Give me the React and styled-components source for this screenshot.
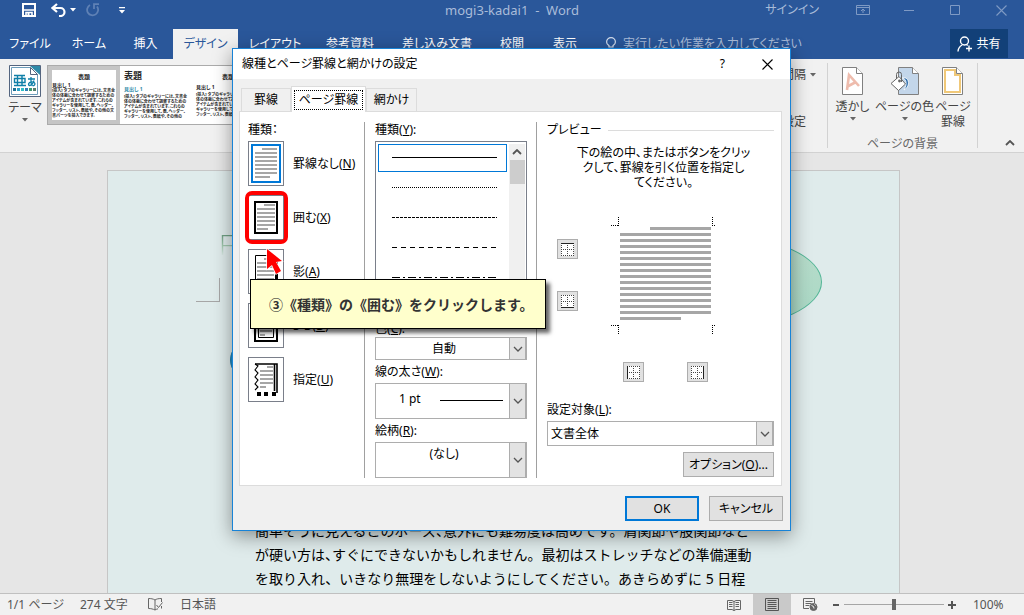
import React from "react";
import styled, { createGlobalStyle, css } from "styled-components";

const Global = createGlobalStyle`
  * { box-sizing: border-box; }
  body {
    margin: 0;
    font-family: "Noto Sans", "Noto Sans CJK JP", sans-serif;
    font-size: 12px;
    line-height: 16px;
    font-feature-settings: "palt";
    color: #000;
  }
  button, select, input {
    font: inherit;
    font-feature-settings: inherit;
    color: inherit;
    margin: 0;
    padding: 0;
    border: 0;
    border-radius: 0;
    background: none;
  }
  svg { display: block; flex: none; }
  ul, p, h1, h2 { margin: 0; padding: 0; font: inherit; list-style: none; }
`;

/* ---------- application window ---------- */

const Window = styled.div`
  position: relative;
  display: flex;
  flex-direction: column;
  height: 100vh;
  overflow: hidden;
  background: #e6e6e6;
`;

const TitleBar = styled.header`
  display: grid;
  grid-template-columns: 1fr auto 1fr;
  align-items: center;
  height: 29px;
  padding-bottom: 10px;
  background: #2a579a;
  color: #a9bcd9;
`;

const QuickAccess = styled.div`
  display: flex;
  align-items: center;
  padding-left: 22px;
`;

const IconButton = styled.button`
  display: flex;
  align-items: center;
  justify-content: center;
  width: ${(p) => p.$w || 16}px;
  height: ${(p) => p.$h || 20}px;
  margin-right: ${(p) => p.$gap || 0}px;
`;

const DocTitle = styled.h1`
  font-size: 13px;
  white-space: pre;
`;

const WindowTools = styled.div`
  display: flex;
  align-items: center;
  justify-content: flex-end;
  gap: 30px;
  padding-right: 15px;
  button:first-child { width: auto; margin-right: 6px; }
`;

const TabRow = styled.nav`
  display: flex;
  height: 30px;
  background: #2a579a;
`;

const RibbonTab = styled.button`
  width: ${(p) => p.$w}px;
  height: 30px;
  text-align: center;
  white-space: nowrap;
  color: ${(p) => (p.$active ? "#2a579a" : "#fff")};
  background: ${(p) => (p.$active ? "#f1f1f1" : "transparent")};
`;

const TellMe = styled.label`
  display: flex;
  align-items: center;
  flex: 1;
  gap: 6px;
  padding-left: 13px;
  color: #a9bcd9;
  input { width: 200px; color: #fff; }
  input::placeholder { color: #a9bcd9; opacity: 1; }
`;

const ShareButton = styled.button`
  display: flex;
  align-items: center;
  justify-content: center;
  gap: 3px;
  width: 58px;
  height: 29px;
  margin-right: 16px;
  color: #fff;
  background: #124078;
`;

const Ribbon = styled.section`
  display: flex;
  height: 94px;
  padding: 4px 0 4px 6px;
  background: #f1f1f1;
  border-bottom: 1px solid #d2d2d2;
  color: #444;
`;

const BigButton = styled.button`
  display: flex;
  flex-direction: column;
  align-items: center;
  align-self: flex-start;
  gap: 3px;
  width: ${(p) => p.$w}px;
  padding-top: ${(p) => p.$top || 2}px;
  line-height: 15px;
  white-space: nowrap;
`;

const Gallery = styled.div`
  display: flex;
  align-self: flex-start;
  width: 500px;
  height: 60px;
  margin: 2px 0 0 3px;
  background: #fff;
  border: 1px solid #ababab;
`;

const StyleCard = styled.button`
  display: flex;
  flex-direction: column;
  justify-content: flex-start;
  width: 72px;
  height: 58px;
  border: 4px solid ${(p) => (p.$selected ? "#c5c5c5" : "#fff")};
  text-align: left;
  color: #222;
  font-size: 4px;
  line-height: 5px;
  font-weight: 700;
`;

const CardTitle = styled.span`
  width: 100%;
  height: ${(p) => (p.$big ? 15 : 13)}px;
  line-height: ${(p) => (p.$big ? 12 : 15)}px;
  font-size: ${(p) => (p.$big ? 9 : 6)}px;
  text-align: ${(p) => p.$align || "left"};
`;

const CardHeading = styled.span`
  font-size: 5px;
  line-height: ${(p) => (p.$tall ? 9 : 5)}px;
  color: ${(p) => p.$color || "#222"};
`;

const RibbonSide = styled.div`
  display: flex;
  flex-direction: column;
  flex: 1;
  justify-content: space-between;
  align-items: flex-end;
  padding: 4px 11px 18px 0;
  button { display: flex; align-items: center; gap: 4px; white-space: nowrap; }
`;

const RibbonGroup = styled.div`
  display: flex;
  flex-direction: column;
  justify-content: space-between;
  width: 151px;
  border: solid #d2d2d2;
  border-width: 0 1px;
  text-align: center;
  line-height: 8px;
  color: #666;
  > div { display: flex; padding-left: 2px; color: #444; }
`;

const Collapse = styled.div`
  display: flex;
  align-items: flex-end;
  width: 46px;
  padding-left: 26px;
`;

/* ---------- document ---------- */

const Workspace = styled.main`
  display: flex;
  justify-content: center;
  flex: 1;
  min-height: 0;
  padding: 17px 17px 0 0;
  overflow: hidden;
`;

const Paper = styled.article`
  position: relative;
  width: 793px;
  padding: 61px 147px 0;
  overflow: hidden;
  background: #dfebeb;
  border: 1px solid #c6c6c6;
  border-bottom: 0;
`;

const WordArt = styled.h2`
  width: 530px;
  height: 24px;
  margin: 0 0 263px -36px;
  font-family: "Open Sans", sans-serif;
  font-size: 28px;
  font-weight: 300;
  line-height: 24px;
  color: transparent;
  background: linear-gradient(#5f9275, #a5cbb2 60%, #dfebeb);
  background-clip: text;
`;

const CropMark = styled.span`
  position: absolute;
  left: 88px;
  top: 107px;
  width: 24px;
  height: 24px;
  border: solid #a6a6a6;
  border-width: 0 1px 1px 0;
`;

const Bubble = styled.span`
  position: absolute;
  left: ${(p) => p.$x}px;
  top: ${(p) => p.$y}px;
  width: ${(p) => p.$w}px;
  height: ${(p) => p.$h}px;
  border-radius: 50%;
  border: 1px solid ${(p) => p.$line};
  background: ${(p) => p.$fill};
`;

const BodyText = styled.p`
  font-size: 14px;
  line-height: 24px;
  font-feature-settings: normal;
  white-space: nowrap;
`;

const Tight = styled.span`
  font-feature-settings: "halt";
`;

const StatusBar = styled.footer`
  display: flex;
  align-items: center;
  height: 22px;
  padding-left: 7px;
  background: #f1f1f1;
  border-top: 1px solid #c0c0c0;
  color: #555;
`;

const StatusItem = styled.button`
  display: flex;
  width: ${(p) => p.$w}px;
  white-space: pre;
`;

const Spacer = styled.div`
  flex: 1;
`;

const ViewButton = styled.button`
  display: flex;
  align-items: center;
  justify-content: center;
  width: 38px;
  height: 21px;
  background: ${(p) => (p.$active ? "#c9c9c9" : "transparent")};
`;

const Zoom = styled.div`
  display: flex;
  align-items: center;
  gap: 4px;
  padding: 0 23px 0 3px;
  output { width: 41px; padding-left: 13px; }
`;

const ZoomSlider = styled.input`
  appearance: none;
  width: 100px;
  height: 12px;
  background: linear-gradient(#a6a6a6, #a6a6a6) center / 100% 1px no-repeat;
  &::-webkit-slider-thumb {
    appearance: none;
    width: 4px;
    height: 11px;
    background: #666;
  }
`;

/* ---------- dialog ---------- */

const Dialog = styled.div`
  position: absolute;
  left: 232px;
  top: 48px;
  width: 559px;
  background: #f0f0f0;
  border: 1px solid #1883d7;
  box-shadow: 0 5px 18px rgba(0, 0, 0, 0.4);
`;

const DialogTitle = styled.div`
  display: flex;
  align-items: center;
  height: 30px;
  padding: 0 17px 0 9px;
  background: #fff;
  h2 { flex: 1; }
  button + button { margin-left: 37px; }
`;

const DialogTabs = styled.div`
  display: flex;
  align-items: flex-end;
  height: 32px;
  padding: 0 8px;
`;

const DialogTab = styled.button`
  height: ${(p) => (p.$active ? 26 : 23)}px;
  width: ${(p) => p.$w}px;
  margin-bottom: ${(p) => (p.$active ? -1 : 0)}px;
  border: 1px solid #dcdcdc;
  border-bottom: 0;
  background: ${(p) => (p.$active ? "#fff" : "#f0f0f0")};
  white-space: nowrap;
  span {
    display: block;
    margin: 0 4px;
    ${(p) => p.$active && css`outline: 1px dotted #000; outline-offset: 1px;`}
  }
`;

const Panel = styled.div`
  display: grid;
  grid-template-columns: 117px 172px 1fr;
  height: 375px;
  margin: 0 8px 0 6px;
  padding: 10px 7px 7px 8px;
  background: #fff;
  border: 1px solid #dcdcdc;
`;

const Column = styled.div`
  display: flex;
  flex-direction: column;
  padding: 0 ${(p) => p.$right || 0}px 0 ${(p) => p.$left || 0}px;
  border-right: ${(p) => (p.$rule ? "1px solid #a0a0a0" : "0")};
`;

const Label = styled.label`
  display: block;
  height: ${(p) => p.$h || 19}px;
  line-height: 16px;
  white-space: nowrap;
`;

const SettingList = styled.div`
  display: flex;
  flex-direction: column;
  gap: 9px;
`;

const Setting = styled.button`
  display: flex;
  align-items: center;
  gap: 9px;
  white-space: nowrap;
`;

const Thumb = styled.span`
  display: flex;
  align-items: center;
  justify-content: center;
  width: 36px;
  height: 45px;
  background: #fff;
  border: 1px solid #7a7f8a;
`;

const ListBox = styled.div`
  display: flex;
  width: 152px;
  height: 177px;
  margin-bottom: 3px;
  padding: 2px 1px 2px 2px;
  border: 1px solid #7a7f8a;
  ul { flex: 1; }
`;

const LineOption = styled.li`
  display: flex;
  align-items: center;
  justify-content: center;
  height: ${(p) => (p.$selected ? 28 : 30)}px;
  padding-left: 4px;
  border: ${(p) => (p.$selected ? "1px solid #0078d7" : "0")};
  margin-bottom: ${(p) => (p.$selected ? 1 : 0)}px;
`;

const ScrollBar = styled.div`
  display: flex;
  flex-direction: column;
  align-items: center;
  width: 16px;
  margin-left: 2px;
  padding-top: 5px;
  background: #f0f0f0;
  i { width: 15px; height: 24px; margin-top: 5px; background: #cdcdcd; }
`;

const ComboBox = styled.div`
  position: relative;
  width: ${(p) => (p.$wide ? "100%" : "152px")};
  height: ${(p) => p.$h}px;
  margin-bottom: ${(p) => p.$after ?? 4}px;
  background: #fff;
  border: 1px solid #adadad;
  select {
    appearance: none;
    width: 100%;
    height: 100%;
    padding: 0 ${(p) => (p.$indent ? 18 : 14)}px ${(p) => p.$lift || 0}px ${(p) => p.$indent || 0}px;
    text-align-last: ${(p) => (p.$indent ? "left" : "center")};
  }
`;

const ComboArrow = styled.span`
  position: absolute;
  inset: 0 0 0 auto;
  display: flex;
  align-items: center;
  justify-content: center;
  width: 17px;
  background: #e3e3e3;
  border: 1px solid #adadad;
  border-width: 0 1px 0 1px;
  pointer-events: none;
`;

const WidthSample = styled.span`
  position: absolute;
  left: 64px;
  top: 16px;
  width: 63px;
  height: 1px;
  background: #000;
  pointer-events: none;
`;

const Legend = styled.div`
  display: flex;
  align-items: center;
  gap: 6px;
  height: 16px;
  white-space: nowrap;
  &::after { content: ""; flex: 1; height: 1px; background: #dcdcdc; }
`;

const Hint = styled.p`
  margin: 7px 0 27px 6px;
  line-height: 15px;
  text-align: center;
  white-space: nowrap;
`;

const PreviewGrid = styled.div`
  display: grid;
  grid-template-columns: 21px 106px;
  column-gap: 32px;
  row-gap: 26px;
  padding-left: 10px;
  margin-bottom: 20px;
`;

const SideButtons = styled.div`
  display: flex;
  flex-direction: column;
  gap: 32px;
  padding-top: 22px;
`;

const BottomButtons = styled.div`
  display: flex;
  grid-column: 2;
  gap: 43px;
  padding-left: 13px;
`;

const EdgeButton = styled.button`
  display: flex;
  align-items: center;
  justify-content: center;
  width: 21px;
  height: 20px;
  background: #e1e1e1;
  border: 1px solid #adadad;
`;

const PushButton = styled.button`
  align-self: flex-end;
  width: ${(p) => p.$w || 74}px;
  height: 25px;
  flex: none;
  background: #e1e1e1;
  border: ${(p) => (p.$primary ? "2px solid #0078d7" : "1px solid #adadad")};
  white-space: nowrap;
`;

const DialogActions = styled.div`
  display: flex;
  justify-content: flex-end;
  gap: 10px;
  padding: 10px 7px 9px;
`;

/* ---------- instruction callout ---------- */

const Highlight = styled.div`
  position: absolute;
  left: 245px;
  top: 191px;
  width: 43px;
  height: 53px;
  border: 4px solid #f00;
  border-radius: 7px;
  pointer-events: none;
`;

const Callout = styled.div`
  position: absolute;
  left: 250px;
  top: 279px;
  width: 296px;
  height: 50px;
  padding-left: 18px;
  background: #ffc;
  border: 1px solid #000;
  box-shadow: 4px 4px 4px rgba(0, 0, 0, 0.6);
  font-size: 14px;
  font-weight: 700;
  line-height: 48px;
  font-feature-settings: normal;
  font-family: "Noto Sans CJK JP", sans-serif;
  color: #333;
  white-space: nowrap;
`;

const Pointer = styled.svg`
  position: absolute;
  left: 264px;
  top: 247px;
`;

/* ---------- drawings ---------- */

const Caret = ({ color = "#666" }) => (
  <svg width="6" height="4" viewBox="0 0 6 4"><path d="M0 0h6L3 3.5z" fill={color} /></svg>
);

const Chevron = ({ up, color = "#555", w = 1.3 }) => (
  <svg width="10" height="6" viewBox="0 0 10 6">
    <path d={up ? "M1 5l4-4 4 4" : "M1 1l4 4 4-4"} fill="none" stroke={color} strokeWidth={w} />
  </svg>
);

const SaveIcon = () => (
  <svg width="14" height="14" viewBox="0 0 14 14">
    <path d="M1 1h12v12H1z" fill="none" stroke="#fff" strokeWidth="2" />
    <path d="M2 7h10M4 13V9.500h6V13" fill="none" stroke="#fff" strokeWidth="1.600" />
    <path d="M5.500 10h2v3h-2z" fill="#fff" />
  </svg>
);

const UndoIcon = () => (
  <svg width="15" height="14" viewBox="0 0 15 14">
    <path d="M6 1L1.500 5 6 9M2 5h7.500a4 4 0 010 8H8" fill="none" stroke="#fff" strokeWidth="2.200" />
  </svg>
);

const RedoIcon = () => (
  <svg width="14" height="14" viewBox="0 0 14 14">
    <path d="M4 2a5.500 5.500 0 107 1.500M8 6V1.200h5" fill="none" stroke="#5f81b5" strokeWidth="1.800" />
  </svg>
);

const MoreIcon = () => (
  <svg width="6" height="7" viewBox="0 0 6 7"><path d="M0 0h6v1.300H0zM0 3h6L3 6.500z" fill="#fff" /></svg>
);

const RibbonOptionsIcon = () => (
  <svg width="14" height="10" viewBox="0 0 14 10" fill="none" stroke="#7f9ac4">
    <path d="M.5.5h13v9H.5zM.5 2.500h13M7 8V4.500M5 6l2-2 2 2" />
  </svg>
);

const MinIcon = () => <svg width="10" height="10" viewBox="0 0 10 10"><path d="M0 5.500h10" stroke="#7f9ac4" /></svg>;
const MaxIcon = () => <svg width="10" height="10" viewBox="0 0 10 10"><path d="M.5.5h9v9h-9z" fill="none" stroke="#7f9ac4" /></svg>;
const CloseIcon = ({ color = "#7f9ac4" }) => (
  <svg width="11" height="11" viewBox="0 0 11 11"><path d="M.5.5l10 10M10.500.5l-10 10" stroke={color} strokeWidth="1.100" /></svg>
);

const BulbIcon = () => (
  <svg width="12" height="14" viewBox="0 0 12 14" fill="none" stroke="#d5dfee" strokeWidth="1.200">
    <path d="M4 10V8.600C2.500 7.800 1.600 6.600 1.600 5a4.400 4.400 0 018.800 0c0 1.600-.9 2.800-2.400 3.600V10zM4 12h4M4.500 13.500h3" />
  </svg>
);

const ShareIcon = () => (
  <svg width="16" height="16" viewBox="0 0 16 16" fill="none" stroke="#fff" strokeWidth="1.400">
    <circle cx="7.500" cy="5" r="4" />
    <path d="M1 15.500c.2-3.500 1.800-5.200 4.200-6.500M9.500 8.500l1.200 1M12 9.500v6M9 12.500h6" />
  </svg>
);

const ThemeIcon = () => (
  <svg width="32" height="32" viewBox="0 0 32 32">
    <path d="M.5.5h31v31H.5z" fill="#fff" stroke="#54657f" />
    <path d="M2.500 2.500h19l7 7v20h-26z" fill="#fff" stroke="#6d9dba" />
    <path d="M21 1h10v9z" fill="#2e8aa8" /><path d="M21.500 2.500v7h7z" fill="#fff" stroke="#54657f" />
    <path d="M5 10.500h11M5 20.500h12M8.500 10.500v10M13 10.500v10M5.500 13.500h10.500v4H5.500z" fill="none" stroke="#0e7fa8" strokeWidth="1.400" />
    <path d="M19 14h7M22 12v5c0 2 .5 3 1.500 4M25 15.500c-1 3-3 5-4.500 5s-1.500-3.500 2-3.700c4-.2 4.500 3.200 1.500 4" fill="none" stroke="#0e7fa8" strokeWidth="1.300" />
    <path d="M4 23h3v3H4z" fill="#1c6f94" /><path d="M8 23h3v3H8z" fill="#29a3c9" /><path d="M12 23h3v3h-3z" fill="#30c0c8" />
    <path d="M16 23h3v3h-3z" fill="#2f7fb6" /><path d="M20 23h3v3h-3z" fill="#3e9a71" /><path d="M24 23h3v3h-3z" fill="#58806c" />
  </svg>
);

const Sheet = ({ fill = "#fff", children, w = 22, x = 0 }) => (
  <svg width={w} height="29" viewBox={`0 0 ${w} 29`}>
    <g transform={`translate(${x} 0)`}>
      <path d="M.5.5h14l6 6v21H.5z" fill={fill} stroke="#808080" />
      <path d="M14.500.5v6h6" fill="#fff" stroke="#808080" />
    </g>
    {children}
  </svg>
);

const WatermarkIcon = () => (
  <Sheet><path d="M5 23L7 8l10 11M5.500 19.500l7.500-4" fill="none" stroke="#eebcad" strokeWidth="2.600" /></Sheet>
);

const PageColorIcon = () => (
  <Sheet w={30} x={8} fill="#c3d6ea">
    <path d="M11 11c5 0 7 5 3 12 5-3 6-9 2-12z" fill="#2f6fad" stroke="#fff" strokeWidth=".8" />
    <path d="M1 16.500l8-7 6.500 7.500-7 6.500z" fill="#fff" stroke="#666" />
    <path d="M6.500 12V7.500a2.500 2.500 0 015 0V15" fill="none" stroke="#666" />
    <circle cx="9.500" cy="14" r="1.400" fill="#666" />
  </Sheet>
);

const PageBorderIcon = () => (
  <Sheet><path d="M3 3h10v5h5v17H3z" fill="none" stroke="#f0c878" strokeWidth="2" /></Sheet>
);

const ProofIcon = () => (
  <svg width="15" height="13" viewBox="0 0 15 13" fill="none" stroke="#666">
    <path d="M7 12V2C5 .8 3 .5.500.5V10.500c2.500 0 4.500.5 6.500 1.500 1-.6 2-1 3-1.200M7 2C8.500 1 10 .5 13.500.5V4M8.500 7l2 2.500 4-5M13.500 8v2.500" />
  </svg>
);

const ReadIcon = () => (
  <svg width="14" height="12" viewBox="0 0 14 12" fill="none" stroke="#666">
    <path d="M.5 1.500H5L7 2.500l2-1h4.500v9H9l-2 1-2-1H.5zM7 2v10M2 3.500h3.500M2 5.500h3.500M2 7.500h3.500M8.500 3.500H12M8.500 5.500H12M8.500 7.500H12" />
  </svg>
);

const PrintIcon = () => (
  <svg width="14" height="13" viewBox="0 0 14 13" fill="none" stroke="#555">
    <path d="M.5.5h13v12H.5zM2.500 2.500h9M2.500 4.500h9M2.500 6.500h9M2.500 8.500h9M2.500 10.500h9" />
  </svg>
);

const WebIcon = () => (
  <svg width="15" height="13" viewBox="0 0 15 13" fill="none" stroke="#666">
    <path d="M6 10.500H.5V.5h11V5M2.500 3.500h7M2.500 5.500h6M2.500 7.500h4" />
    <circle cx="10.500" cy="9" r="3.500" fill="#666" />
    <path d="M8.500 7.500l2 1 .5 2M11.500 6.500l1 1" stroke="#f1f1f1" />
  </svg>
);

const PlusMinus = ({ plus }) => (
  <svg width="8" height="8" viewBox="0 0 8 8"><path d={plus ? "M0 4h8M4 0v8" : "M1 4h6"} stroke="#555" strokeWidth="2" /></svg>
);

const TextLines = ({ x, y, w, n }) =>
  Array.from({ length: n }, (_, i) => (
    <path
      key={i}
      d={`M${i === 0 ? x + 7 : x} ${y + i * 4}H${i === n - 1 ? x + w - 7 : x + w}`}
      stroke="#a6a6a6"
      strokeWidth="2"
    />
  ));

const SettingArt = ({ kind }) => (
  <svg width="30" height="39" viewBox="0 0 30 39" fill="none">
    {kind === "none" && <><path d="M1 1h28v37H1z" stroke="#0078d7" strokeWidth="2" /><TextLines x={4} y={5} w={22} n={8} /></>}
    {kind === "box" && <><path d="M4 4h22v31H4z" stroke="#000" strokeWidth="2" /><TextLines x={6} y={7} w={18} n={7} /></>}
    {kind === "shadow" && <><path d="M4.500 3.500h20v30h-20z" stroke="#000" /><path d="M26 6v30H7" stroke="#000" strokeWidth="2" /><TextLines x={6} y={7} w={17} n={7} /></>}
    {kind === "threeD" && <><path d="M4 4h22v31H4z" stroke="#000" strokeWidth="2" /><path d="M7.500 6.500h15v25h-15z" stroke="#000" /><TextLines x={9} y={9} w={12} n={6} /></>}
    {kind === "custom" && (
      <>
        <path d="M4 4h22v29M23.500 4v27" stroke="#000" strokeWidth="1.600" />
        <path d="M4 4l3 2-3 4 3 3-3 4 3 3-3 4 3 3-3 3" stroke="#000" strokeWidth="1.100" />
        <path d="M6 34h4M13 34h4M21 34h4" stroke="#000" strokeWidth="4" />
        <TextLines x={9} y={7} w={13} n={6} />
      </>
    )}
  </svg>
);

const LineSample = ({ dash }) => (
  <svg width="105" height="2" viewBox="0 0 105 2"><path d="M0 .5h105" stroke="#000" strokeDasharray={dash} /></svg>
);

const EdgeArt = ({ edge }) => {
  const solid = { top: "M0 .5h13", bottom: "M0 12.500h13", left: "M.5 0v13", right: "M12.500 0v13" }[edge];
  return (
    <svg width="13" height="13" viewBox="0 0 13 13" fill="none" stroke="#444">
      <path d="M0 0h13v13H0z" fill="#fff" stroke="none" />
      <path d="M0 .5h13M0 6.500h13M0 12.500h13M.5 0v13M6.500 0v13M12.500 0v13" strokeDasharray="1 1" />
      <path d={solid} stroke="#222" />
    </svg>
  );
};

const PreviewArt = () => (
  <svg width="106" height="119" viewBox="0 0 106 119" fill="none">
    <g stroke="#000" strokeDasharray="1 1">
      <path d="M1 8.500h8M8.500 0v9M102 8.500h8M102.500 0v9" />
      <path d="M1 108.500h8M8.500 108v9M102 108.500h8M102.500 108v9" />
    </g>
    {Array.from({ length: 16 }, (_, i) => (
      <path
        key={i}
        d={`M${i === 0 ? 40 : 10} ${11.5 + i * 6}H${i === 15 ? 71 : 101}`}
        stroke="#a6a6a6"
        strokeWidth="3"
      />
    ))}
  </svg>
);

/* ---------- data ---------- */

const tabs = [
  ["ファイル", 60], ["ホーム", 58], ["挿入", 55], ["デザイン", 65, true], ["レイアウト", 74],
  ["参考資料", 76], ["差し込み文書", 98], ["校閲", 52], ["表示", 54],
];

const settings = [
  ["none", "罫線なし", "N"], ["box", "囲む", "X"], ["shadow", "影", "A"],
  ["threeD", "3-D", "D"], ["custom", "指定", "U"],
];

const dashes = ["none", "1 1", "3 1", "5 4", "8 3 2 3"];

const sampleStart =
  "[挿入] タブのギャラリーには、文書全体の体裁に合わせて調整するためのアイテムが含まれています。これらのギャラリーを使用して、表、ヘッダー、フッター、";
const sampleMore = "リスト、表紙や、その他の";
const sampleEnd = "文書パーツを挿入できます。";

const Key = ({ text, k, end = "" }) => <span>{text}(<u>{k}</u>){end}</span>;

const Combo = ({ id, value, children, ...rest }) => (
  <ComboBox {...rest}>
    <select id={id} defaultValue={value}><option>{value}</option></select>
    {children}
    <ComboArrow><Chevron /></ComboArrow>
  </ComboBox>
);

export default function App() {
  return (
    <Window>
      <Global />
      <TitleBar>
        <QuickAccess>
          <IconButton $w={14} $gap={15} aria-label="上書き保存"><SaveIcon /></IconButton>
          <IconButton $w={15} $gap={4} aria-label="元に戻す"><UndoIcon /></IconButton>
          <IconButton $w={6} $gap={10} aria-label="履歴"><Caret color="#fff" /></IconButton>
          <IconButton $w={14} $gap={19} aria-label="やり直し"><RedoIcon /></IconButton>
          <IconButton $w={6} aria-label="カスタマイズ"><MoreIcon /></IconButton>
        </QuickAccess>
        <DocTitle>{"mogi3-kadai1  -  Word"}</DocTitle>
        <WindowTools>
          <IconButton>サインイン</IconButton>
          <IconButton aria-label="リボンの表示オプション"><RibbonOptionsIcon /></IconButton>
          <IconButton aria-label="最小化"><MinIcon /></IconButton>
          <IconButton aria-label="最大化"><MaxIcon /></IconButton>
          <IconButton aria-label="閉じる"><CloseIcon /></IconButton>
        </WindowTools>
      </TitleBar>
      <TabRow>
        {tabs.map(([name, w, active]) => (
          <RibbonTab key={name} $w={w} $active={active}>{name}</RibbonTab>
        ))}
        <TellMe>
          <BulbIcon />
          <input aria-label="操作アシスト" placeholder="実行したい作業を入力してください" />
        </TellMe>
        <ShareButton><ShareIcon />共有</ShareButton>
      </TabRow>

      <Ribbon>
        <BigButton $w={38}><ThemeIcon /><span>テーマ</span><Caret /></BigButton>
        <Gallery>
          <StyleCard $selected>
            <CardTitle $align="center">表題</CardTitle>
            <CardHeading>見出し 1</CardHeading>
            <span>{sampleStart}{sampleMore}{sampleEnd}</span>
          </StyleCard>
          <StyleCard>
            <CardTitle $big>表題</CardTitle>
            <CardHeading $tall $color="#2e8aa8">見出し 1</CardHeading>
            <span>{sampleStart}{sampleMore}</span>
          </StyleCard>
          <StyleCard>
            <CardTitle $align="center">表題</CardTitle>
            <CardHeading $tall>見出し 1</CardHeading>
            <span>{sampleStart}{sampleMore}</span>
          </StyleCard>
        </Gallery>
        <RibbonSide>
          <button>段落の間隔<Caret /></button>
          <button>既定に設定<svg width="6" height="4" /></button>
        </RibbonSide>
        <RibbonGroup>
          <div>
            <BigButton $w={45} $top={4}><WatermarkIcon /><span>透かし</span><Caret /></BigButton>
            <BigButton $w={59} $top={4}><PageColorIcon /><span>ページの色</span><Caret /></BigButton>
            <BigButton $w={38} $top={4}><PageBorderIcon /><span>ページ<br />罫線</span></BigButton>
          </div>
          ページの背景
        </RibbonGroup>
        <Collapse>
          <IconButton $w={12} $h={10} aria-label="リボンを折りたたむ"><Chevron up w={1.8} /></IconButton>
        </Collapse>
      </Ribbon>

      <Workspace>
        <Paper>
          <WordArt>F</WordArt>
          <CropMark />
          <Bubble $x={122} $y={169} $w={40} $h={40} $line="#1c7fb5" $fill="#2090cc" />
          <Bubble $x={514} $y={65} $w={200} $h={92} $line="#52b596" $fill="linear-gradient(#b9dccb, #a8d8c4)" />
          <BodyText>
            簡単そうに見えるこのポーズ<Tight>、</Tight>意外にも難易度は高めです。肩関節や股関節など<br />
            が硬い方は<Tight>、</Tight>すぐにできないかもしれません。最初はストレッチなどの準備運動<br />
            を取り入れ、いきなり無理をしないようにしてください。あきらめずに 5 日程
          </BodyText>
        </Paper>
      </Workspace>

      <StatusBar>
        <StatusItem $w={73}>1/1 ページ</StatusItem>
        <StatusItem $w={68}>274 文字</StatusItem>
        <StatusItem $w={32} aria-label="文章校正"><ProofIcon /></StatusItem>
        <StatusItem $w={60}>日本語</StatusItem>
        <Spacer />
        <ViewButton aria-label="閲覧モード"><ReadIcon /></ViewButton>
        <ViewButton $active aria-label="印刷レイアウト"><PrintIcon /></ViewButton>
        <ViewButton aria-label="Web レイアウト"><WebIcon /></ViewButton>
        <Zoom>
          <button aria-label="縮小"><PlusMinus /></button>
          <ZoomSlider type="range" min="0" max="100" defaultValue="50" aria-label="ズーム" />
          <button aria-label="拡大"><PlusMinus plus /></button>
          <output>100%</output>
        </Zoom>
      </StatusBar>

      <Dialog role="dialog" aria-labelledby="dlg-title">
        <DialogTitle>
          <h2 id="dlg-title">線種とページ罫線と網かけの設定</h2>
          <button aria-label="ヘルプ">?</button>
          <button aria-label="閉じる"><CloseIcon color="#000" /></button>
        </DialogTitle>
        <DialogTabs role="tablist">
          <DialogTab $w={50} role="tab">罫線</DialogTab>
          <DialogTab $w={75} $active role="tab"><span>ページ罫線</span></DialogTab>
          <DialogTab $w={51} role="tab">網かけ</DialogTab>
        </DialogTabs>
        <Panel>
          <Column $rule>
            <Label as="span">種類：</Label>
            <SettingList>
              {settings.map(([kind, text, k]) => (
                <Setting key={kind}>
                  <Thumb><SettingArt kind={kind} /></Thumb>
                  <Key text={text} k={k} />
                </Setting>
              ))}
            </SettingList>
          </Column>
          <Column $rule $left={10} $right={9}>
            <Label as="span" id="style-label"><Key text="種類" k="Y" end=":" /></Label>
            <ListBox>
              <ul role="listbox" aria-labelledby="style-label">
                {dashes.map((dash, i) => (
                  <LineOption key={dash} role="option" aria-selected={i === 0} $selected={i === 0}>
                    <LineSample dash={dash} />
                  </LineOption>
                ))}
              </ul>
              <ScrollBar><Chevron up w={1.8} /><i /></ScrollBar>
            </ListBox>
            <Label htmlFor="color" $h={16}><Key text="色" k="C" end=":" /></Label>
            <Combo id="color" value="自動" $h={23} />
            <Label htmlFor="width"><Key text="線の太さ" k="W" end=":" /></Label>
            <Combo id="width" value="1 pt" $h={36} $indent={23} $lift={4}><WidthSample /></Combo>
            <Label htmlFor="art"><Key text="絵柄" k="R" end=":" /></Label>
            <Combo id="art" value="(なし)" $h={36} $lift={12} $after={0} />
          </Column>
          <Column $left={10}>
            <Legend>プレビュー</Legend>
            <Hint>下の絵の中、またはボタンをクリッ<br />クして、罫線を引く位置を指定し<br />てください。</Hint>
            <PreviewGrid>
              <SideButtons>
                <EdgeButton aria-label="上罫線"><EdgeArt edge="top" /></EdgeButton>
                <EdgeButton aria-label="下罫線"><EdgeArt edge="bottom" /></EdgeButton>
              </SideButtons>
              <PreviewArt />
              <BottomButtons>
                <EdgeButton aria-label="左罫線"><EdgeArt edge="left" /></EdgeButton>
                <EdgeButton aria-label="右罫線"><EdgeArt edge="right" /></EdgeButton>
              </BottomButtons>
            </PreviewGrid>
            <Label htmlFor="target"><Key text="設定対象" k="L" end=":" /></Label>
            <Combo id="target" value="文書全体" $wide $h={25} $indent={3} $after={6} />
            <PushButton $w={91}><Key text="オプション" k="O" end="..." /></PushButton>
          </Column>
        </Panel>
        <DialogActions>
          <PushButton $primary>OK</PushButton>
          <PushButton>キャンセル</PushButton>
        </DialogActions>
      </Dialog>

      <Highlight />
      <Callout role="tooltip">③《種類》の《囲む》をクリックします。</Callout>
      <Pointer width="24" height="32" viewBox="0 0 24 32">
        <path d="M3 2l15 12-6 1 5 9-5 3-4-9-5 4z" fill="#f00" stroke="#fff" strokeWidth="1.500" paintOrder="stroke" />
      </Pointer>
    </Window>
  );
}
